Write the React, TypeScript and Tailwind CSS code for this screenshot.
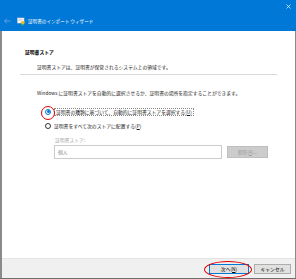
import React from 'react';

// Windows 10 style certificate import wizard (store selection page)

const FONT = { fontFamily: "'Noto Sans CJK JP', 'Noto Sans', sans-serif" };

function CertIcon() {
  return (
    <svg width="9" height="9" viewBox="0 0 9 9">
      <rect x="0.5" y="1" width="6.5" height="5" fill="#ffffff" stroke="#c9c9c9" strokeWidth="0.6" />
      <line x1="1.5" y1="2.5" x2="5.5" y2="2.5" stroke="#9aa6b2" strokeWidth="0.5" />
      <line x1="1.5" y1="3.7" x2="4.5" y2="3.7" stroke="#9aa6b2" strokeWidth="0.5" />
      <circle cx="5.8" cy="5.6" r="1.8" fill="#e8c020" />
      <path d="M4.9 6.8 L4.4 8.6 L5.4 8 L5.8 8.8 L6.2 7" fill="#7cb342" />
      <path d="M6.5 6.8 L7.2 8.6 L6.5 8.2" fill="#7cb342" />
    </svg>
  );
}

function Radio({ checked }: { checked?: boolean }) {
  return (
    <span
      className={`w-[6px] h-[6px] rounded-full border-[0.8px] bg-white flex items-center justify-center shrink-0 ${
        checked ? 'border-[#0078d7]' : 'border-[#333333]'
      }`}
    >
      {checked && <span className="w-[3px] h-[3px] rounded-full bg-[#0078d7]" />}
    </span>
  );
}

export default function App() {
  return (
    <div className="relative w-[296px] h-[279px] flex flex-col bg-white overflow-hidden" style={FONT}>
      {/* Title area */}
      <div className="h-[31px] bg-[#0078d7] flex flex-col shrink-0">
        <div className="h-[13px] flex items-center justify-end pr-[5px]">
          <svg width="5" height="5" viewBox="0 0 5 5">
            <path d="M0.5 0.5 L4.5 4.5 M4.5 0.5 L0.5 4.5" stroke="#ffffff" strokeWidth="0.7" />
          </svg>
        </div>
        <div className="flex items-center h-[16px] pl-[4px]">
          <svg width="7" height="6" viewBox="0 0 7 6">
            <path d="M0.5 3 H6.5 M0.5 3 L3 0.7 M0.5 3 L3 5.3" stroke="#7fb2e5" strokeWidth="0.7" fill="none" />
          </svg>
          <span className="ml-[6px]">
            <CertIcon />
          </span>
          <span className="ml-[2px] text-[4.6px] leading-[7px] text-white">証明書のインポート ウィザード</span>
        </div>
      </div>

      {/* Body */}
      <div className="flex-1 flex flex-col border-l-2 border-r border-[#8a8a8a] text-[4.8px] leading-[7px] text-[#1a1a1a]">
        <div className="pt-[17px] pl-[23px] font-bold text-black">証明書ストア</div>
        <div className="mt-[8px] pl-[35px]">証明書ストアは、証明書が保管されるシステム上の領域です。</div>
        <div className="mt-[4px] mx-[18px] h-px bg-[#d9d9d9]" />

        <div className="mt-[14px] pl-[35px]">
          Windows に証明書ストアを自動的に選択させるか、証明書の場所を指定することができます。
        </div>

        <div className="mt-[12px] pl-[43px] flex items-center gap-[3px] h-[7px]">
          <Radio checked />
          <span className="border-[0.5px] border-dotted border-[#8a8a8a] px-[1px] leading-[6px]">
            証明書の種類に基づいて、自動的に証明書ストアを選択する(<u>U</u>)
          </span>
        </div>
        <div className="mt-[7px] pl-[43px] flex items-center gap-[3px] h-[7px]">
          <Radio />
          <span>
            証明書をすべて次のストアに配置する(<u>P</u>)
          </span>
        </div>

        <div className="mt-[7px] pl-[53px] text-[#a6a6a6]">証明書ストア:</div>
        <div className="mt-[1.5px] pl-[52px] flex items-center">
          <div className="w-[168px] h-[14px] border border-[#cccccc] bg-white flex items-center pl-[3px] text-[#8a8a8a]">
            個人
          </div>
          <div className="ml-[5px] w-[41px] h-[12px] bg-[#cccccc] border border-[#bfbfbf] flex items-center justify-center text-[#9a9a9a]">
            参照(<u>R</u>)...
          </div>
        </div>

        {/* Footer */}
        <div className="mt-auto h-[20px] bg-[#f0f0f0] border-t border-[#e3e3e3] flex items-center justify-end pr-[4px] gap-[5px]">
          <div className="w-[40px] h-[10px] bg-[#e1e1e1] border border-[#0078d7] flex items-center justify-center text-black">
            次へ(<u>N</u>)
          </div>
          <div className="w-[37px] h-[10px] bg-[#e1e1e1] border border-[#adadad] flex items-center justify-center text-black">
            キャンセル
          </div>
        </div>
      </div>
      <div className="h-[1px] bg-[#6e6e6e] shrink-0" />

      {/* Red annotation marks */}
      <div className="absolute left-[41px] top-[106px] w-[14px] h-[14px] rounded-full border-[1.5px] border-[#e00000]" />
      <div className="absolute left-[204px] top-[261px] w-[48px] h-[17px] rounded-[50%] border-[1.5px] border-[#e00000]" />
    </div>
  );
}
